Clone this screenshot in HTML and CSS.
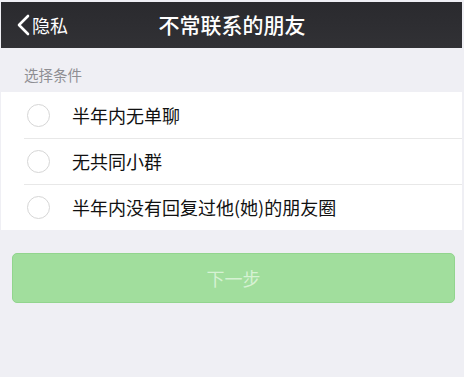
FILE: index.html
```html
<!DOCTYPE html>
<html lang="zh">
<head>
<meta charset="utf-8">
<link rel="stylesheet" href="styles.css">
</head>
<body>
<div class="page">
  <header class="nav">
    <div class="back">
      <svg class="chev" width="13" height="22" viewBox="0 0 13 22"><polyline points="11,2 2,11 11,20" fill="none" stroke="#fff" stroke-width="2.6" stroke-linecap="round" stroke-linejoin="round"/></svg>
      <span>隐私</span>
    </div>
    <div class="title">不常联系的朋友</div>
  </header>
  <div class="section-title">选择条件</div>
  <ul class="list">
    <li class="row"><span class="radio"></span><span class="label">半年内无单聊</span></li>
    <li class="row"><span class="radio"></span><span class="label">无共同小群</span></li>
    <li class="row"><span class="radio"></span><span class="label">半年内没有回复过他(她)的朋友圈</span></li>
  </ul>
  <div class="actions">
    <button class="next">下一步</button>
  </div>
</div>
</body>
</html>
```
FILE: styles.css
```css
html, body {
  margin: 0;
  padding: 0;
  background: #efeff4;
}
body {
  font-family: "Noto Sans CJK SC", "Noto Sans", sans-serif;
  width: 464px;
  height: 377px;
  overflow: hidden;
}
.page {
  height: 377px;
  padding-top: 2px;
  padding-left: 1px;
  padding-right: 2px;
  box-sizing: border-box;
  background: #efeff4;
}
.nav {
  position: relative;
  height: 46px;
  background: linear-gradient(#2a2a2e, #313135);
  display: flex;
  align-items: center;
}
.back {
  display: flex;
  align-items: center;
  padding-left: 16px;
  color: #fff;
  font-size: 18px;
  gap: 2px;
}
.back span {
  line-height: 1;
  margin-top: -1px;
}
.chev {
  display: block;
}
.title {
  position: absolute;
  left: 0;
  right: 0;
  top: 0;
  bottom: 0;
  display: flex;
  align-items: center;
  justify-content: center;
  color: #fff;
  font-size: 21px;
  font-weight: 500;
  line-height: 1;
  pointer-events: none;
  padding-bottom: 1px;
  padding-left: 1px;
}
.section-title {
  height: 44px;
  box-sizing: border-box;
  padding: 18px 0 0 23px;
  color: #8e8e93;
  font-size: 14.5px;
  line-height: 18px;
}
.list {
  list-style: none;
  margin: 0;
  padding: 0;
  background: #fff;
}
.row {
  height: 46px;
  display: flex;
  align-items: center;
  padding-left: 26px;
  position: relative;
}
.row + .row::before {
  content: "";
  position: absolute;
  left: 23px;
  right: 0;
  top: 0;
  height: 1px;
  background: #e8e8e8;
}
.radio {
  width: 23px;
  height: 23px;
  border: 1.5px solid #d6d6d6;
  border-radius: 50%;
  box-sizing: border-box;
  flex: none;
}
.label {
  margin-left: 22px;
  font-size: 18px;
  color: #111;
  line-height: 1;
}
.actions {
  padding: 23px 7px 0 11px;
}
.next {
  display: block;
  width: 100%;
  height: 50px;
  border: 1px solid #92d58e;
  border-radius: 5px;
  background: #a1de9d;
  color: #d6f2d3;
  font-family: "Noto Sans CJK SC", "Noto Sans", sans-serif;
  font-size: 18px;
  padding: 0;
}
```
